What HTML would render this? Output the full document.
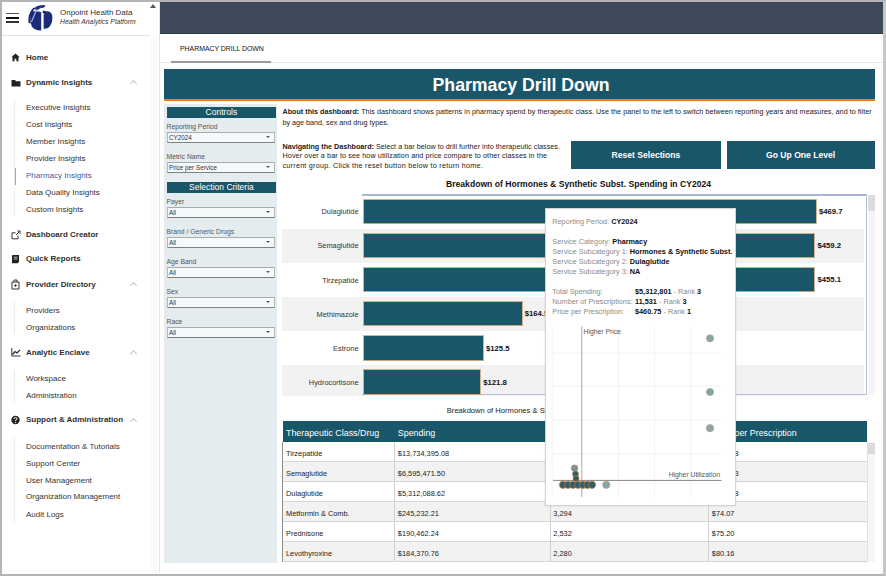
<!DOCTYPE html>
<html><head><meta charset="utf-8">
<style>
*{box-sizing:border-box;margin:0;padding:0}
html,body{width:886px;height:576px;overflow:hidden;background:#fff}
body{font-family:"Liberation Sans",sans-serif;color:#222;position:relative}
.abs{position:absolute}
#frame{position:absolute;left:0;top:0;width:886px;height:576px;border-top:2px solid #b4b4b4;border-left:2px solid #b4b4b4;border-right:3px solid #c8c8c8;border-bottom:2.5px solid #b4b4b4;pointer-events:none;z-index:50}
#sidebar{position:absolute;left:2px;top:2px;width:158px;height:571px;background:#fff;border-right:1px solid #e6e6e6}
#topbar{position:absolute;left:160px;top:2px;width:724px;height:32px;background:#3e4a5a}
#tabs{position:absolute;left:160px;top:34px;width:724px;height:29px;background:#fff;border-bottom:1px solid #e4e4e4}
#content{position:absolute;left:160px;top:63px;width:724px;height:510px;background:#fff}
.nav{position:absolute;left:26px;font-size:8px;line-height:10px;white-space:nowrap}
.nav.b{font-weight:bold;color:#303030}
.nav.s{color:#333}
.nav.act{color:#4b5a9c}
.chev{left:131px;width:5px;height:5px;border-left:1px solid #c4c4c4;border-top:1px solid #c4c4c4;transform:rotate(45deg)}
.phdr{left:166.7px;width:109.5px;height:10.5px;background:#19566a;color:#fff;font-size:8.5px;line-height:10.5px;text-align:center}
.plab{left:166.5px;font-size:6.8px;line-height:8px;color:#555;white-space:nowrap}
.psel{left:167px;width:107.5px;height:11.3px;background:#f6f9fa;border-top:1px solid #a9acae;border-bottom:1.5px solid #7d8184;border-left:1px solid #b5b8ba;border-right:1px solid #b5b8ba;font-size:6.3px;line-height:9px;color:#333;padding-left:1px;white-space:nowrap}
.psel i{position:absolute;right:3.5px;top:3.5px;width:0;height:0;border-left:2px solid transparent;border-right:2px solid transparent;border-top:2.5px solid #555}
.txt{font-size:7.2px;color:#222;white-space:nowrap}
.btn{height:28px;background:#19566a;color:#fff;font-weight:bold;font-size:8.6px;line-height:28px;text-align:center}
.clab{left:260px;width:98.5px;text-align:right;font-size:7.4px;line-height:10px;color:#333;white-space:nowrap}
.bar{left:362.5px;height:25.5px;background:#19566a;border:1px solid #d2b291;border-bottom-color:#c9a27c}
.cval{font-size:7.7px;line-height:10px;font-weight:bold;color:#111;white-space:nowrap}
.th{font-size:8.9px;line-height:10px;color:#fff;white-space:nowrap}
.td{font-size:7.4px;line-height:9px;color:#222;white-space:nowrap}
.tt{font-size:7.3px;line-height:10px;color:#8a8a8a;white-space:nowrap}
.tt b{color:#111}
</style></head>
<body>
<div id="sidebar"></div><div class="abs" style="left:151px;top:36px;width:7px;height:537px;background:#fafafa"></div>
<div class="nav b" style="top:52.5px">Home</div>
<div class="nav b" style="top:77.7px">Dynamic Insights</div>
<div class="nav s" style="top:102.8px">Executive Insights</div>
<div class="nav s" style="top:119.8px">Cost Insights</div>
<div class="nav s" style="top:136.8px">Member Insights</div>
<div class="nav s" style="top:153.9px">Provider Insights</div>
<div class="nav s act" style="top:171.0px">Pharmacy Insights</div>
<div class="nav s" style="top:188.0px">Data Quality Insights</div>
<div class="nav s" style="top:204.9px">Custom Insights</div>
<div class="nav b" style="top:230.0px">Dashboard Creator</div>
<div class="nav b" style="top:254.2px">Quick Reports</div>
<div class="nav b" style="top:280.0px">Provider Directory</div>
<div class="nav s" style="top:305.6px">Providers</div>
<div class="nav s" style="top:322.8px">Organizations</div>
<div class="nav b" style="top:347.5px">Analytic Enclave</div>
<div class="nav s" style="top:374.1px">Workspace</div>
<div class="nav s" style="top:390.8px">Administration</div>
<div class="nav b" style="top:415.2px">Support &amp; Administration</div>
<div class="nav s" style="top:441.6px">Documentation &amp; Tutorials</div>
<div class="nav s" style="top:458.6px">Support Center</div>
<div class="nav s" style="top:475.6px">User Management</div>
<div class="nav s" style="top:492.4px">Organization Management</div>
<div class="nav s" style="top:509.8px">Audit Logs</div>
<div class="abs" style="left:2px;top:35px;width:148px;height:1px;background:#e2e2e2"></div>
<div class="abs" style="left:6px;top:13px;width:13px;height:1.3px;background:#555"></div>
<div class="abs" style="left:6px;top:17px;width:13px;height:1.8px;background:#111"></div>
<div class="abs" style="left:6px;top:21px;width:13px;height:1.5px;background:#333"></div>
<svg class="abs" style="left:25px;top:2px" width="30" height="32" viewBox="25 2 30 32">
<path d="M31.2 12 Q29.3 20 31.8 26.5 Q35 30.8 41.2 30.6 L41.2 12.2 Q37.5 10.8 34 11.3 Z" fill="#1a2c78"/>
<path d="M28.6 23 Q27.3 14 33.5 7.6 L35 8.6 Q30 14 30.6 23.5 Z" fill="#1a2c78"/>
<path d="M33.8 8.4 Q38.5 4.6 45.5 5.2 L44.2 7.4 Q40 7.4 36.8 10.6 Z" fill="#22358a"/>
<path d="M36.8 9.4 L31.4 22" stroke="#9fb3e6" stroke-width="1.2"/>
<path d="M45.2 11.6 Q50.4 10.2 52.2 15.5 Q53.2 22.5 49 27.2 Q46.2 29.2 43.6 28.8 L43.6 15.2 Z" fill="#1a2c78"/>
<circle cx="44.1" cy="12.1" r="1.5" fill="#141f5c"/>
</svg>
<div class="abs" style="left:60px;top:8px;font-size:8px;line-height:9px;color:#333;white-space:nowrap">Onpoint Health Data</div>
<div class="abs" style="left:60px;top:17.5px;font-size:6.8px;line-height:8px;color:#333;font-style:italic;white-space:nowrap">Health Analytics Platform</div>
<div class="abs" style="left:150px;top:4px;width:0;height:0;border-left:3px solid transparent;border-right:3px solid transparent;border-bottom:4px solid #555"></div>
<svg class="abs" style="left:11px;top:53px" width="9" height="9" viewBox="0 0 9 9"><path d="M4.5 0.5 L0.3 4.3 L1.5 4.3 L1.5 8.3 L3.6 8.3 L3.6 5.8 L5.4 5.8 L5.4 8.3 L7.5 8.3 L7.5 4.3 L8.7 4.3Z" fill="#222"/></svg>
<svg class="abs" style="left:10.5px;top:79px" width="10" height="8" viewBox="0 0 10 8"><path d="M0.5 1 L4 1 L5 2.2 L9.5 2.2 L9.5 7.5 L0.5 7.5Z" fill="#222"/></svg>
<svg class="abs" style="left:10.5px;top:230px" width="10" height="10" viewBox="0 0 10 10"><path d="M7 5.5 V8.8 H1 V2.8 H4.5" stroke="#333" stroke-width="1" fill="none"/><path d="M5 5 L9 1 M6.3 1 H9 V3.7" stroke="#333" stroke-width="1" fill="none"/></svg>
<svg class="abs" style="left:11px;top:254px" width="9" height="10" viewBox="0 0 9 10"><path d="M1.5 1 H8 V8 L6.5 9.3 H1 V2Z" fill="#222"/><path d="M2.8 3.2 H6.3 M2.8 5 H6.3" stroke="#fff" stroke-width="0.7"/></svg>
<svg class="abs" style="left:11px;top:279px" width="9" height="11" viewBox="0 0 9 11"><path d="M1 3 H8 V10 H1Z M3 3 V1 H6 V3" stroke="#333" stroke-width="1" fill="none"/><path d="M4.5 5 V8 M3 6.5 H6" stroke="#333" stroke-width="0.8"/></svg>
<svg class="abs" style="left:10.5px;top:347px" width="10" height="10" viewBox="0 0 10 10"><path d="M0.8 1 V9 H9.5" stroke="#333" stroke-width="1" fill="none"/><path d="M1.5 7.5 L4 4.5 L6 6 L9 2.8" stroke="#222" stroke-width="1.2" fill="none"/></svg>
<svg class="abs" style="left:11px;top:415px" width="9" height="10" viewBox="0 0 9 10"><circle cx="4.5" cy="5" r="4.2" fill="#222"/><path d="M3 4 Q3 2.5 4.5 2.5 Q6 2.5 6 3.8 Q6 4.7 4.6 5.3 V6.2" stroke="#fff" stroke-width="1" fill="none"/><circle cx="4.6" cy="7.6" r="0.6" fill="#fff"/></svg>
<div class="abs chev" style="top:81px"></div>
<div class="abs chev" style="top:283px"></div>
<div class="abs chev" style="top:351px"></div>
<div class="abs chev" style="top:419px"></div>
<div class="abs" style="left:14px;top:99px;width:1px;height:117px;background:#ececec"></div>
<div class="abs" style="left:14.5px;top:168px;width:1px;height:17px;background:#9aa3cf"></div>
<div class="abs" style="left:14px;top:302px;width:1px;height:32px;background:#ececec"></div>
<div class="abs" style="left:14px;top:370px;width:1px;height:32px;background:#ececec"></div>
<div class="abs" style="left:14px;top:438px;width:1px;height:85px;background:#ececec"></div>

<div id="topbar"></div><div class="abs" style="left:160px;top:33px;width:724px;height:1px;background:#2e3845"></div>
<div id="tabs"></div>
<div id="content"></div>
<div class="abs" style="left:180px;top:43.5px;font-size:6.9px;line-height:9px;color:#111;white-space:nowrap">PHARMACY DRILL DOWN</div>
<div class="abs" style="left:160px;top:62px;width:724px;height:1px;background:#e6e6e6"></div>
<div class="abs" style="left:171px;top:61px;width:100px;height:1.8px;background:#9a9aa0"></div>
<div class="abs" style="left:163.5px;top:68.5px;width:711px;height:30.5px;background:#19566a"></div>
<div class="abs" style="left:163.5px;top:99px;width:711px;height:2px;background:#ef7d22"></div>
<div class="abs" style="left:163.5px;top:72px;width:711px;height:26px;line-height:26px;text-align:center;font-size:17.7px;font-weight:bold;color:#fff;padding-left:4px">Pharmacy Drill Down</div>
<div class="abs" style="left:163.5px;top:104px;width:113px;height:458.5px;background:#e5ecef"></div>
<div class="abs phdr" style="top:107px">Controls</div>
<div class="abs plab" style="top:122.5px">Reporting Period</div>
<div class="abs psel" style="top:131.7px"><span>CY2024</span><i></i></div>
<div class="abs plab" style="top:152.5px">Metric Name</div>
<div class="abs psel" style="top:161.7px"><span>Price per Service</span><i></i></div>
<div class="abs phdr" style="top:182px">Selection Criteria</div>
<div class="abs plab" style="top:197.5px">Payer</div>
<div class="abs psel" style="top:206.8px"><span>All</span><i></i></div>
<div class="abs plab" style="top:227.5px">Brand / Generic Drugs</div>
<div class="abs psel" style="top:236.8px"><span>All</span><i></i></div>
<div class="abs plab" style="top:257.5px">Age Band</div>
<div class="abs psel" style="top:266.8px"><span>All</span><i></i></div>
<div class="abs plab" style="top:287.5px">Sex</div>
<div class="abs psel" style="top:296.8px"><span>All</span><i></i></div>
<div class="abs plab" style="top:317.5px">Race</div>
<div class="abs psel" style="top:326.8px"><span>All</span><i></i></div>
<div class="abs txt" style="left:282.5px;top:105.5px;line-height:11px"><b>About this dashboard:</b> <span style="letter-spacing:0.04px">This dashboard shows patterns in pharmacy spend by therapeutic class. Use the panel to the left to switch between reporting years and measures, and to filter</span><br>by age band, sex and drug types.</div>
<div class="abs txt" style="left:282.5px;top:141.5px;line-height:9.6px"><b>Navigating the Dashboard:</b> <span style="letter-spacing:0.03px">Select a bar below to drill further into therapeutic classes.</span><br><span style="letter-spacing:0.11px">Hover over a bar to see how utilization and price compare to other classes in the</span><br><span style="letter-spacing:0.25px">current group. Click the reset button below to return home.</span></div>
<div class="abs btn" style="left:570.6px;top:141.3px;width:150.6px">Reset Selections</div>
<div class="abs btn" style="left:726.6px;top:141.3px;width:148px">Go Up One Level</div>
<div class="abs" style="left:446px;top:179.4px;font-size:8.6px;line-height:10px;font-weight:bold;color:#111;white-space:nowrap" id="ct1">Breakdown of Hormones &amp; Synthetic Subst. Spending in CY2024</div>
<div class="abs" style="left:281.5px;top:228.5px;width:582px;height:34.1px;background:#f2f2f2"></div>
<div class="abs" style="left:281.5px;top:296.7px;width:582px;height:34.1px;background:#f2f2f2"></div>
<div class="abs" style="left:281.5px;top:364.9px;width:582px;height:31.6px;background:#f2f2f2"></div>
<div class="abs" style="left:362px;top:194.3px;width:504.5px;height:1.5px;background:#a9b5d0"></div>
<div class="abs" style="left:865.5px;top:194.3px;width:1px;height:200px;background:#b4c0dc"></div>
<div class="abs" style="left:362px;top:393.5px;width:504.5px;height:1px;background:#b4c0dc"></div>
<div class="abs" style="left:867.5px;top:194.8px;width:7.5px;height:200px;background:#f4f4f4"></div><div class="abs" style="left:868px;top:194.8px;width:6.5px;height:16.5px;background:#dcdcdc"></div>
<div class="abs clab" style="top:207.3px">Dulaglutide</div>
<div class="abs bar" style="top:198.6px;width:454.4px"></div>
<div class="abs cval" style="left:818.9px;top:207.1px">$469.7</div>
<div class="abs clab" style="top:241.4px">Semaglutide</div>
<div class="abs bar" style="top:232.7px;width:452.9px"></div>
<div class="abs cval" style="left:817.4px;top:241.2px">$459.2</div>
<div class="abs clab" style="top:275.5px">Tirzepatide</div>
<div class="abs bar" style="top:266.8px;width:452.9px"></div>
<div class="abs cval" style="left:817.4px;top:275.3px">$455.1</div>
<div class="abs clab" style="top:309.6px">Methimazole</div>
<div class="abs bar" style="top:300.9px;width:160.2px"></div>
<div class="abs cval" style="left:524.7px;top:309.4px">$164.5</div>
<div class="abs clab" style="top:343.7px">Estrone</div>
<div class="abs bar" style="top:335.0px;width:121.4px"></div>
<div class="abs cval" style="left:485.9px;top:343.5px">$125.5</div>
<div class="abs clab" style="top:377.8px">Hydrocortisone</div>
<div class="abs bar" style="top:369.1px;width:118.8px"></div>
<div class="abs cval" style="left:483.3px;top:377.6px">$121.8</div>
<div class="abs" style="left:446.8px;top:405.5px;font-size:7.6px;line-height:10px;color:#222;white-space:nowrap">Breakdown of Hormones &amp; Synthetic Subst. Spending in CY2024</div>
<div class="abs" style="left:282.5px;top:421.2px;width:584.5px;height:21px;background:#19566a"></div>
<div class="abs th" style="left:286.0px;top:428.0px">Therapeutic Class/Drug</div>
<div class="abs th" style="left:397.8px;top:428.0px">Spending</div>
<div class="abs th" style="left:553.3px;top:428.0px">Number of Prescriptions</div>
<div class="abs th" style="left:711.8px;top:428.0px">Price per Prescription</div>
<div class="abs" style="left:282.5px;top:442.2px;width:584.5px;height:20px;background:#fff;border-bottom:1px solid #d6d6d6"></div>
<div class="abs td" style="left:286.0px;top:449.2px">Tirzepatide</div>
<div class="abs td" style="left:397.8px;top:449.2px">$13,734,395.08</div>
<div class="abs td" style="left:553.3px;top:449.2px">29,826</div>
<div class="abs td" style="left:711.8px;top:449.2px">$460.48</div>
<div class="abs" style="left:282.5px;top:462.2px;width:584.5px;height:20px;background:#f2f2f2;border-bottom:1px solid #d6d6d6"></div>
<div class="abs td" style="left:286.0px;top:469.2px">Semaglutide</div>
<div class="abs td" style="left:397.8px;top:469.2px">$6,595,471.50</div>
<div class="abs td" style="left:553.3px;top:469.2px">14,362</div>
<div class="abs td" style="left:711.8px;top:469.2px">$459.23</div>
<div class="abs" style="left:282.5px;top:482.2px;width:584.5px;height:20px;background:#fff;border-bottom:1px solid #d6d6d6"></div>
<div class="abs td" style="left:286.0px;top:489.2px">Dulaglutide</div>
<div class="abs td" style="left:397.8px;top:489.2px">$5,312,088.62</div>
<div class="abs td" style="left:553.3px;top:489.2px">11,531</div>
<div class="abs td" style="left:711.8px;top:489.2px">$460.68</div>
<div class="abs" style="left:282.5px;top:502.2px;width:584.5px;height:20px;background:#f2f2f2;border-bottom:1px solid #d6d6d6"></div>
<div class="abs td" style="left:286.0px;top:509.2px">Metformin &amp; Comb.</div>
<div class="abs td" style="left:397.8px;top:509.2px">$245,232.21</div>
<div class="abs td" style="left:553.3px;top:509.2px">3,294</div>
<div class="abs td" style="left:711.8px;top:509.2px">$74.07</div>
<div class="abs" style="left:282.5px;top:522.2px;width:584.5px;height:20px;background:#fff;border-bottom:1px solid #d6d6d6"></div>
<div class="abs td" style="left:286.0px;top:529.2px">Prednisone</div>
<div class="abs td" style="left:397.8px;top:529.2px">$190,462.24</div>
<div class="abs td" style="left:553.3px;top:529.2px">2,532</div>
<div class="abs td" style="left:711.8px;top:529.2px">$75.20</div>
<div class="abs" style="left:282.5px;top:542.2px;width:584.5px;height:20px;background:#f2f2f2;border-bottom:1px solid #d6d6d6"></div>
<div class="abs td" style="left:286.0px;top:549.2px">Levothyroxine</div>
<div class="abs td" style="left:397.8px;top:549.2px">$184,370.76</div>
<div class="abs td" style="left:553.3px;top:549.2px">2,280</div>
<div class="abs td" style="left:711.8px;top:549.2px">$80.16</div>
<div class="abs" style="left:394.3px;top:442.2px;width:1px;height:120px;background:#d0d0d0"></div>
<div class="abs" style="left:549.8px;top:442.2px;width:1px;height:120px;background:#d0d0d0"></div>
<div class="abs" style="left:708.3px;top:442.2px;width:1px;height:120px;background:#d0d0d0"></div>
<div class="abs" style="left:282.3px;top:442.2px;width:1px;height:120px;background:#8c8c8c"></div>
<div class="abs" style="left:866.5px;top:442.2px;width:1px;height:120px;background:#e0e0e0"></div>
<div class="abs" style="left:867.5px;top:442.2px;width:7.5px;height:120px;background:#f6f6f6"></div><div class="abs" style="left:868px;top:442.5px;width:6.5px;height:11px;background:#dcdcdc"></div>
<div class="abs" style="left:544.5px;top:207.5px;width:191.5px;height:298px;background:#fff;border:1px solid #d4d4d4;box-shadow:0 0 2px rgba(0,0,0,0.12)"></div>
<div class="abs tt" style="left:552.3px;top:217.2px">Reporting Period: <b>CY2024</b></div>
<div class="abs tt" style="left:552.3px;top:236.8px">Service Category: <b>Pharmacy</b></div>
<div class="abs tt" style="left:552.3px;top:247.0px">Service Subcategory 1: <b>Hormones &amp; Synthetic Subst.</b></div>
<div class="abs tt" style="left:552.3px;top:257.3px">Service Subcategory 2: <b>Dulaglutide</b></div>
<div class="abs tt" style="left:552.3px;top:267.0px">Service Subcategory 3: <b>NA</b></div>
<div class="abs tt" style="left:552.3px;top:286.8px">Total Spending:</div><div class="abs tt" style="left:635px;top:286.8px"><b>$5,312,801</b> - Rank <b>3</b></div>
<div class="abs tt" style="left:552.3px;top:296.9px">Number of Prescriptions:</div><div class="abs tt" style="left:635px;top:296.9px"><b>11,531</b> - Rank <b>3</b></div>
<div class="abs tt" style="left:552.3px;top:307.2px">Price per Prescription:</div><div class="abs tt" style="left:635px;top:307.2px"><b>$460.75</b> - Rank <b>1</b></div>
<svg class="abs" style="left:545px;top:320px" width="190" height="185" viewBox="545 320 190 185">
<g stroke="#efefef" stroke-width="0.8">
<line x1="618.5" y1="326" x2="618.5" y2="497"/><line x1="654.5" y1="326" x2="654.5" y2="497"/><line x1="690.8" y1="326" x2="690.8" y2="497"/>
<line x1="553" y1="353" x2="721" y2="353"/><line x1="553" y1="386" x2="721" y2="386"/><line x1="553" y1="420" x2="721" y2="420"/><line x1="553" y1="454" x2="721" y2="454"/>
<line x1="552" y1="326" x2="552" y2="497"/>
</g>
<line x1="581.8" y1="326.5" x2="581.8" y2="497" stroke="#a8a8a8" stroke-width="1"/>
<line x1="553" y1="480.4" x2="721.5" y2="480.4" stroke="#858585" stroke-width="1"/>
<text x="583.5" y="334.3" font-size="6.8" fill="#555" font-family="Liberation Sans">Higher Price</text>
<text x="720" y="476.5" font-size="6.8" fill="#555" text-anchor="end" font-family="Liberation Sans">Higher Utilization</text>
<g fill="#84a8a9" stroke="#b8a08a" stroke-width="0.8">
<circle cx="710" cy="338.3" r="3.6"/><circle cx="710" cy="392" r="3.6"/><circle cx="710" cy="428.2" r="3.6"/><circle cx="606.3" cy="484.8" r="3.6"/>
</g>
<g fill="#2c5f68" stroke="#c9773a" stroke-width="0.7">
<circle cx="574.6" cy="468.2" r="3.2" fill="#6f9aa0"/><circle cx="575.5" cy="474" r="3"/><circle cx="576" cy="478.5" r="3"/>
<circle cx="563" cy="484.8" r="3.6"/><circle cx="568" cy="484.8" r="3.6"/><circle cx="573" cy="484.8" r="3.6"/><circle cx="578" cy="484.8" r="3.6"/><circle cx="583" cy="484.8" r="3.6"/><circle cx="587.5" cy="484.8" r="3.6"/><circle cx="592" cy="484.8" r="3.6"/>
</g>
</svg>


<div id="frame"></div>
</body></html>
